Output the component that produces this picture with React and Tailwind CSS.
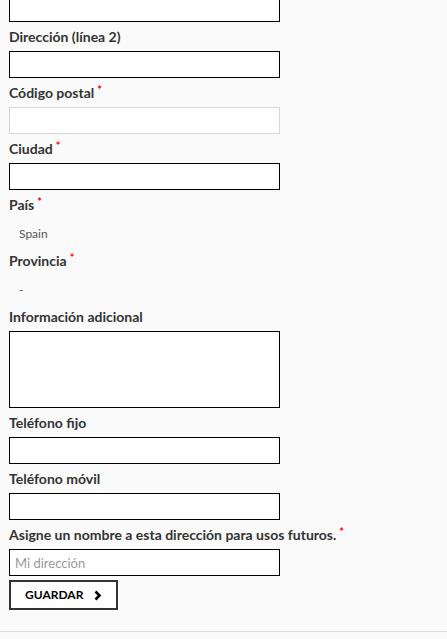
const Req = () => (
  <sup className="relative -top-[4px] ml-[3px] text-[11px] font-bold leading-none text-[#ff0000]">*</sup>
);

const Label = ({ children, required }) => (
  <div className="flex h-[29px] items-center text-[14px] font-bold leading-none text-[#333]">
    <span>
      {children}
      {required && <Req />}
    </span>
  </div>
);

const Input = ({ placeholder, light }) => (
  <input
    type="text"
    placeholder={placeholder}
    className={
      "block h-[27px] w-[271px] border bg-white px-[5px] text-[13px] text-[#333] outline-none placeholder:text-[#999] " +
      (light ? "border-[#d6d6d6]" : "border-black")
    }
  />
);

const Plain = ({ children }) => (
  <div className="flex h-[27px] items-center pl-[10px] pt-[3px] text-[12px] text-[#555]">{children}</div>
);

export default function App() {
  return (
    <div className="min-h-[639px] overflow-hidden bg-[#fafafa] font-['Lato','Noto_Sans',sans-serif]">
      <div className="-mt-[5px] pl-[9px]">
        <Input />
        <Label>Dirección (línea 2)</Label>
        <Input />
        <Label required>Código postal</Label>
        <Input light />
        <Label required>Ciudad</Label>
        <Input />
        <Label required>País</Label>
        <Plain>Spain</Plain>
        <Label required>Provincia</Label>
        <Plain>-</Plain>
        <Label>Información adicional</Label>
        <textarea className="block h-[77px] w-[271px] resize-none border border-black bg-white outline-none" />
        <Label>Teléfono fijo</Label>
        <Input />
        <Label>Teléfono móvil</Label>
        <Input />
        <Label required>Asigne un nombre a esta dirección para usos futuros.</Label>
        <Input placeholder="Mi dirección" />
        <button className="mt-[4px] flex h-[30px] w-[109px] items-center border-2 border-[#333] bg-white pl-[14px] text-[12px] font-bold text-black">
          GUARDAR
          <svg className="ml-[11px]" width="8" height="11" viewBox="0 0 8 11">
            <path d="M1.5 1.5 L5.5 5.5 L1.5 9.5" fill="none" stroke="black" strokeWidth="2.6" />
          </svg>
        </button>
      </div>
      <div className="mt-[21px] border-t border-[#dcdcdc]" />
    </div>
  );
}
